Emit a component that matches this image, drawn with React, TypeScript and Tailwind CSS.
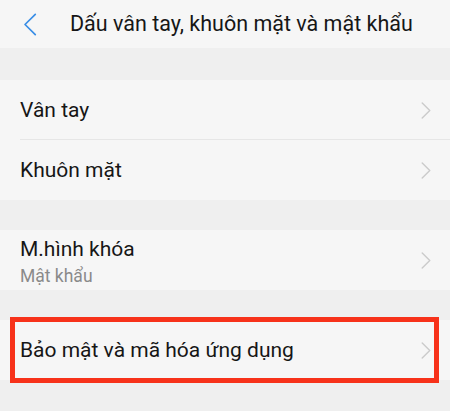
function Chevron({ dir, className }: { dir: "left" | "right"; className?: string }) {
  return dir === "left" ? (
    <svg viewBox="0 0 14 24" className={className} fill="none" stroke="currentColor" strokeWidth={1.8} strokeLinecap="round" strokeLinejoin="round">
      <path d="M12.5 1.5 1.8 12l10.7 10.5" />
    </svg>
  ) : (
    <svg viewBox="0 0 10 18" className={className} fill="none" stroke="currentColor" strokeWidth={1.5} strokeLinecap="round" strokeLinejoin="round">
      <path d="M1 1l8 8-8 8" />
    </svg>
  );
}

function Row({ title, sub, divider }: { title: string; sub?: string; divider?: boolean }) {
  return (
    <div className="relative flex h-[60px] items-center bg-[#f6f6f6] pl-5 pr-[19px]">
      <div className={`flex-1 ${sub ? "pt-[4px]" : "pt-[1px]"}`}>
        <p className="text-[21px] leading-[25px] text-[#161616]">{title}</p>
        {sub && <p className="mt-[3px] text-[17.5px] leading-[22px] text-[#8a8a8a]">{sub}</p>}
      </div>
      <Chevron dir="right" className="h-[17px] w-[10px] text-[#cbcbcb]" />
      {divider && <div className="absolute bottom-0 left-5 right-0 h-px bg-[#e6e6e6]" />}
    </div>
  );
}

export default function App() {
  return (
    <div
      className="h-[411px] w-[450px] overflow-hidden bg-[#efefef]"
      style={{ fontFamily: "Roboto, 'Noto Sans', sans-serif" }}
    >
      {/* Header */}
      <div className="flex h-[48px] items-center bg-[#f6f6f6]">
        <Chevron dir="left" className="ml-[23px] h-[23px] w-[14px] text-[#3a8ee6]" />
        <h1 className="ml-[33px] text-[21.5px] text-[#161616]">Dấu vân tay, khuôn mặt và mật khẩu</h1>
      </div>

      <div className="h-[32px]" />
      <Row title="Vân tay" divider />
      <Row title="Khuôn mặt" />

      <div className="h-[30px]" />
      <Row title="M.hình khóa" sub="Mật khẩu" />

      <div className="h-[30px]" />
      <div className="relative">
        <Row title="Bảo mật và mã hóa ứng dụng" />
        <div className="absolute left-[10px] right-[11px] top-[-3px] bottom-[-3px] border-[5px] border-[#f7321a]" />
      </div>
    </div>
  );
}
